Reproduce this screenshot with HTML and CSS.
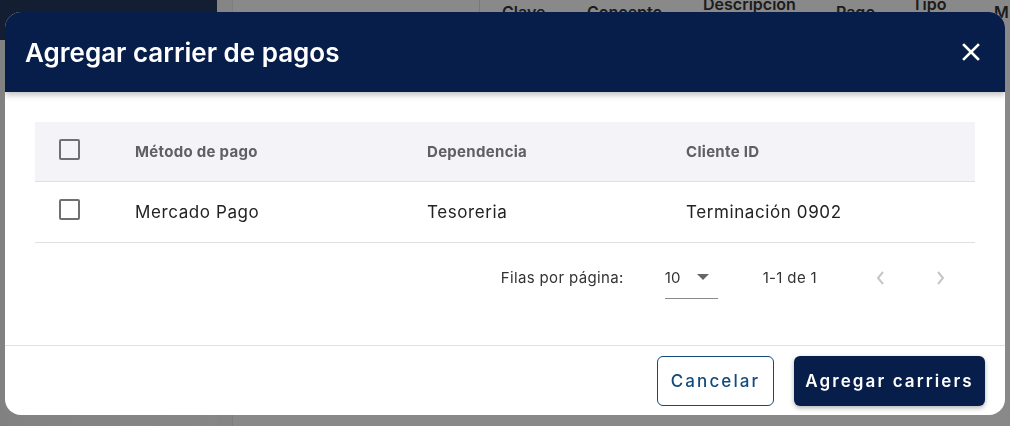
FILE: index.html
```html
<!DOCTYPE html>
<html lang="es">
<head>
  <meta charset="UTF-8" />
  <meta name="viewport" content="width=device-width, initial-scale=1.0"/>
  <title>Agregar carrier de pagos</title>
  <link rel="stylesheet" href="styles.css">
</head>
<body>
  <div class="app">
    <aside class="sidebar">
      <div class="sidebar-top"></div>
    </aside>
    <main class="main">
      <div class="rail"></div>
      <div class="bg-head">
        <span class="bg-col c1">Clave</span>
        <span class="bg-col c2">Concepto</span>
        <span class="bg-col c3">Descripción</span>
        <span class="bg-col c4">Pago</span>
        <span class="bg-col c5">Tipo</span>
        <span class="bg-col c6">M</span>
      </div>
    </main>
  </div>

  <div class="backdrop">
    <div class="modal">
      <header class="modal-header">
        <h2>Agregar carrier de pagos</h2>
        <button class="close" type="button" aria-label="Cerrar">
          <svg width="18" height="18" viewBox="0 0 18 18">
            <path d="M2 2 L16 16 M16 2 L2 16" stroke="#fff" stroke-width="2.6" stroke-linecap="square"/>
          </svg>
        </button>
      </header>

      <div class="modal-body">
        <table class="grid">
          <colgroup>
            <col style="width:100px">
            <col style="width:292px">
            <col style="width:259px">
            <col>
          </colgroup>
          <thead>
            <tr>
              <th class="check"><span class="box"></span></th>
              <th>Método de pago</th>
              <th>Dependencia</th>
              <th>Cliente ID</th>
            </tr>
          </thead>
          <tbody>
            <tr>
              <td class="check"><span class="box"></span></td>
              <td>Mercado Pago</td>
              <td>Tesoreria</td>
              <td>Terminación 0902</td>
            </tr>
          </tbody>
        </table>

        <div class="pager">
          <span class="pager-label">Filas por página:</span>
          <div class="pager-select">
            <span>10</span>
            <svg width="12" height="6" viewBox="0 0 12 6"><path d="M0 0 L12 0 L6 6 Z" fill="#666"/></svg>
          </div>
          <span class="pager-range">1-1 de 1</span>
          <button class="pager-btn" type="button" aria-label="Anterior">
            <svg width="10" height="16" viewBox="0 0 10 16"><path d="M8 2 L3 8 L8 14" fill="none" stroke="#c6c6c6" stroke-width="2"/></svg>
          </button>
          <button class="pager-btn" type="button" aria-label="Siguiente">
            <svg width="10" height="16" viewBox="0 0 10 16"><path d="M2 2 L7 8 L2 14" fill="none" stroke="#c6c6c6" stroke-width="2"/></svg>
          </button>
        </div>
      </div>

      <footer class="modal-footer">
        <button class="btn btn-outline" type="button">Cancelar</button>
        <button class="btn btn-solid" type="button">Agregar carriers</button>
      </footer>
    </div>
  </div>
</body>
</html>
```

FILE: styles.css
```css
* {
  box-sizing: border-box;
}
body {
  margin: 0;
  font-family: Inter, "Open Sans", sans-serif;
  background: #ffffff;
  width: 1010px;
  height: 426px;
  overflow: hidden;
}

/* page behind the dialog */
.app {
  display: flex;
  height: 426px;
}
.sidebar {
  width: 217px;
  flex-shrink: 0;
  background: linear-gradient(90deg, #ececec, #f6f6f6);
}
.sidebar-top {
  height: 40px;
  background: #26375c;
}
.main {
  flex: 1;
  display: flex;
  overflow: hidden;
  background: #fafafa;
}
.rail {
  width: 16px;
  flex-shrink: 0;
  background: #f2f2f2;
  border-right: 1px solid #e6e6e6;
}
.bg-head {
  display: flex;
  flex-shrink: 0;
  height: 30px;
  margin-left: 246px;
  padding-left: 22px;
  border-left: 1px solid #ddd;
}
.bg-col {
  font-weight: 600;
  font-size: 16px;
  color: #333;
  margin-top: 2px;
  flex-shrink: 0;
}
.c1 { width: 85px; }
.c2 { width: 116px; }
.c3 { width: 133px; margin-top: -6px; }
.c4 { width: 76px; }
.c5 { width: 82px; margin-top: -6px; }

.backdrop {
  position: fixed;
  inset: 0;
  background: rgba(0, 0, 0, 0.45);
  padding: 12px 5px 11px 5px;
}

/* dialog */
.modal {
  background: #ffffff;
  border-radius: 16px;
  height: 403px;
  display: flex;
  flex-direction: column;
  overflow: hidden;
}
.modal-header {
  height: 80px;
  background: #081e4a;
  display: flex;
  align-items: center;
  justify-content: space-between;
  padding: 0 25px 0 20px;
  box-shadow: 0 3px 6px rgba(0, 0, 0, 0.25);
  position: relative;
}
.modal-header h2 {
  margin: 0;
  color: #ffffff;
  font-size: 26px;
  font-weight: 600;
}
.close {
  background: none;
  border: none;
  padding: 0;
  width: 18px;
  height: 18px;
  display: flex;
  cursor: pointer;
}

.modal-body {
  padding: 30px 30px 41px 30px;
  border-bottom: 1px solid #e0e0e0;
}
.grid {
  width: 940px;
  border-collapse: collapse;
  table-layout: fixed;
}
.grid th {
  background: #f3f3f8;
  height: 59px;
  text-align: left;
  font-size: 15px;
  font-weight: 700;
  letter-spacing: 0.3px;
  color: #606060;
  border-bottom: 1px solid #e0e0e0;
  padding: 0;
}
.grid td {
  height: 61px;
  font-size: 17px;
  letter-spacing: 0.6px;
  color: #222;
  border-bottom: 1px solid #e0e0e0;
  padding: 0;
}
.grid .check {
  padding-left: 24px;
}
.box {
  display: block;
  width: 21px;
  height: 21px;
  border: 2px solid #707070;
  border-radius: 2px;
}
thead .box {
  margin-top: -3px;
}
tbody .box {
  margin-top: -5px;
}

.pager {
  display: flex;
  align-items: center;
  justify-content: flex-end;
  height: 52px;
  margin-top: 9px;
  padding-right: 22px;
  font-size: 15px;
  letter-spacing: 0.35px;
  color: #333;
}
.pager-label {
  margin-right: 41px;
}
.pager-select {
  width: 53px;
  height: 42px;
  display: flex;
  align-items: center;
  justify-content: space-between;
  padding: 0 9px 0 0;
  border-bottom: 1px solid #8a8a8a;
}
.pager-range {
  margin-left: 45px;
  margin-right: 51px;
}
.pager-btn {
  background: none;
  border: none;
  width: 24px;
  height: 24px;
  display: flex;
  align-items: center;
  justify-content: center;
  padding: 0;
  margin-left: 37px;
}
.pager-btn:first-of-type {
  margin-left: 0;
}

.modal-footer {
  display: flex;
  justify-content: flex-end;
  gap: 20px;
  padding: 10px 20px 0 0;
}
.btn {
  height: 50px;
  font-family: inherit;
  font-size: 17px;
  font-weight: 600;
  letter-spacing: 2.1px;
  border-radius: 6px;
  cursor: pointer;
}
.btn-outline {
  width: 117px;
  background: #ffffff;
  color: #124a7c;
  border: 1px solid #124a7c;
  font-weight: 500;
}
.btn-solid {
  width: 191px;
  background: #081e4a;
  color: #ffffff;
  border: none;
  box-shadow: 0 2px 5px rgba(0, 0, 0, 0.3);
}
```
